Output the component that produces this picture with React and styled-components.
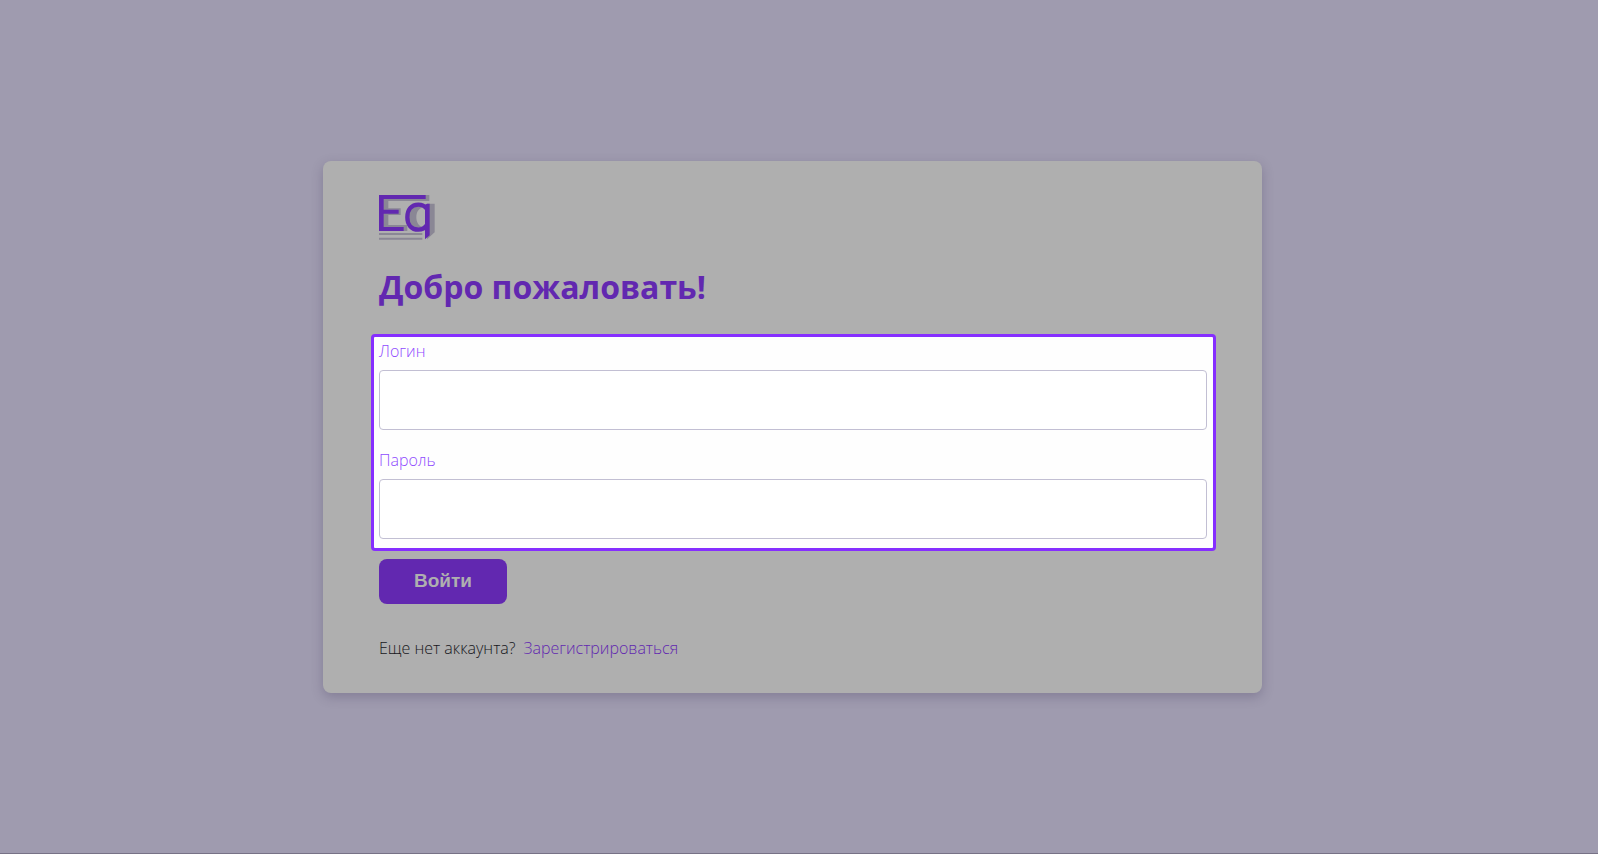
import React from "react";
import styled, { createGlobalStyle } from "styled-components";

const GlobalStyle = createGlobalStyle`
  *, *::before, *::after { box-sizing: border-box; }
  body {
    margin: 0;
    background: #9f9baf;
    color: #17171c;
    font: 300 16px/24px "Open Sans", "Noto Sans", sans-serif;
  }
`;

const Page = styled.main`
  min-height: 100vh;
  display: flex;
  align-items: center;
  justify-content: center;
  padding: 24px 37px 24px 24px;
  border-bottom: 1px solid #777286;
`;

const Card = styled.section`
  width: 100%;
  max-width: 939px;
  padding: 34px 46px 33px 48px;
  border-radius: 8px;
  background: #afafaf;
  box-shadow: 0 4px 12px rgba(60, 50, 85, 0.28);
`;

const Inset = styled.div`
  padding: 0 8px;
`;

const LogoMark = styled.svg`
  display: block;
  width: 56px;
  height: 45px;
`;

const Title = styled.h1`
  margin: 24px 0;
  color: #6228b0;
  font-size: 32px;
  line-height: 46px;
  font-weight: 700;
`;

const Fields = styled.div`
  display: flex;
  flex-direction: column;
  gap: 18px;
  padding: 2px 6px 9px 5px;
  border: 3px solid #862eff;
  border-radius: 4px;
  background: #fefefe;
`;

const Field = styled.div`
  display: flex;
  flex-direction: column;
  gap: 7px;
`;

const Label = styled.label`
  color: #8f4bff;
`;

const Input = styled.input`
  width: 100%;
  height: 60px;
  padding: 0 16px;
  border: 1px solid #c2bfd3;
  border-radius: 4px;
  background: #fff;
  color: #17171c;
  font: inherit;
  outline: none;
`;

const Submit = styled.button`
  display: block;
  width: 128px;
  height: 45px;
  margin-top: 8px;
  padding: 0;
  border: 0;
  border-radius: 8px;
  background: #6228b0;
  color: #afafaf;
  font: 700 19px/24px "Liberation Sans", Arial, sans-serif;
  cursor: pointer;
`;

const Footer = styled.p`
  display: flex;
  gap: 8px;
  margin: 32px 0 0;
`;

const Link = styled.a`
  color: #6228b0;
  text-decoration: none;
`;

function Logo() {
  return (
    <LogoMark viewBox="206 135 168 135" role="img" aria-label="Eq">
      <g fill="#8a8795">
        <path d="M206 135H357V153H234V175H271V195H234V225H291V243H206Z" />
        <path d="M350 161H373V247L350 268Z" />
        <path
          fillRule="evenodd"
          d="M330 160C308 160 294 178 294 202C294 225 306 242 330 242C338 242 345 238 350 232V168C345 163 338 160 330 160ZM339 172C325 174 318 187 318 202C318 217 325 229 339 232L346 228V175Z"
        />
        <path d="M206 249H336V255H206ZM206 263H336V269H206Z" />
      </g>
      <g fill="none" stroke="#6228b0">
        <path strokeWidth="14" d="M213 135V243" />
        <path strokeWidth="12" d="M206 141H346M206 185H265M206 237H280" />
        <path
          strokeWidth="13"
          d="M350 177C343 168 334 164 324 164C303 164 291 180 291 202C291 224 303 239 324 239C334 239 344 234 350 225"
        />
      </g>
      <path fill="#6228b0" d="M344 164L350 161H358V256L344 268Z" />
    </LogoMark>
  );
}

function TextField({ id, label, ...rest }) {
  return (
    <Field>
      <Label htmlFor={id}>{label}</Label>
      <Input id={id} name={id} {...rest} />
    </Field>
  );
}

export default function App() {
  return (
    <>
      <GlobalStyle />
      <Page>
        <Card>
          <Inset>
            <Logo />
            <Title>Добро пожаловать!</Title>
          </Inset>
          <form onSubmit={(e) => e.preventDefault()}>
            <Fields>
              <TextField id="login" label="Логин" type="text" autoComplete="username" />
              <TextField id="password" label="Пароль" type="password" autoComplete="current-password" />
            </Fields>
            <Inset>
              <Submit type="submit">Войти</Submit>
            </Inset>
          </form>
          <Inset>
            <Footer>
              Еще нет аккаунта?
              <Link href="#register">Зарегистрироваться</Link>
            </Footer>
          </Inset>
        </Card>
      </Page>
    </>
  );
}
